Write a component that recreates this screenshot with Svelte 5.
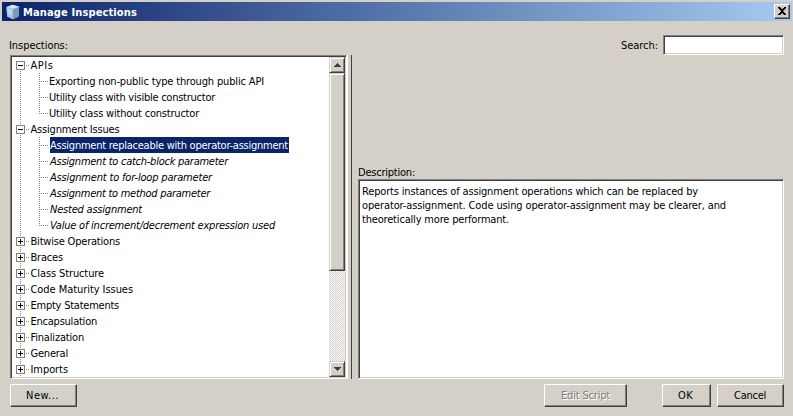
<script>
  const groups = [
    { name: 'APIs', open: true, items: [
      { t: 'Exporting non-public type through public API', w: 215 },
      { t: 'Utility class with visible constructor', w: 166 },
      { t: 'Utility class without constructor', w: 150 }
    ] , w: 23 },
    { name: 'Assignment Issues', open: true, items: [
      { t: 'Assignment replaceable with operator-assignment', w: 238, selected: true },
      { t: 'Assignment to catch-block parameter', w: 178, off: true },
      { t: 'Assignment to for-loop parameter', w: 162, off: true },
      { t: 'Assignment to method parameter', w: 160, off: true },
      { t: 'Nested assignment', w: 92, off: true },
      { t: 'Value of increment/decrement expression used', w: 225, off: true }
    ], w: 89 },
    { name: 'Bitwise Operations', w: 89.5 },
    { name: 'Braces', w: 32.5 },
    { name: 'Class Structure', w: 73.5 },
    { name: 'Code Maturity Issues', w: 102.5 },
    { name: 'Empty Statements', w: 88.5 },
    { name: 'Encapsulation', w: 66.5 },
    { name: 'Finalization', w: 53.5 },
    { name: 'General', w: 37.5 },
    { name: 'Imports', w: 37.5 }
  ];
  const description = [
    { t: 'Reports instances of assignment operations which can be replaced by', w: 336 },
    { t: 'operator-assignment. Code using operator-assignment may be clearer, and', w: 364 },
    { t: 'theoretically more performant.', w: 147 }
  ];

  function fit(node, width) {
    node.style.letterSpacing = '0px';
    const natural = node.getBoundingClientRect().width;
    node.style.letterSpacing = (width - natural) / node.textContent.length + 'px';
  }
</script>

{#snippet label(text, width)}<span class="label" use:fit={width}>{text}</span>{/snippet}

<div class="dialog">
  <header class="titlebar">
    <svg class="logo" width="14" height="16" viewBox="0 0 14 16">
      <path d="M6.5 .8 13.2 2.8 12.6 12.4 7 15.3 1.2 12.6 .4 3Z" fill="#8fabcb" />
      <path d="M6.5 .8 13.2 2.8 7.5 5 .4 3Z" fill="#d3e7f6" />
      <path d="M.4 3 7.5 5 7 15.3 1.2 12.6Z" fill="#a4c4e6" />
      <path d="M7.5 5 13.2 2.8 12.6 12.4 7 15.3Z" fill="#7c99ba" />
      <path d="M1.2 4 5.5 5.2V11.5L1.8 10Z" fill="#bcd8f3" />
    </svg>
    <h1>{@render label('Manage Inspections', 114)}</h1>
    <button class="close" aria-label="Close">
      <svg width="8" height="8" viewBox="0 0 8 8" shape-rendering="crispEdges"><path d="M0 0h2v1h1v1h2V1h1V0h2v1H7v1H6v1H5v2h1v1h1v1h1v1H6V7H5V6H3v1H2v1H0V7h1V6h1V5h1V3H2V2H1V1H0Z" /></svg>
    </button>
  </header>

  <div class="top">
    <span>{@render label('Inspections:', 59)}</span>
    <div class="search"><span>{@render label('Search:', 37)}</span><input class="sunken" aria-label="Search" /></div>
  </div>

  <main>
    <section class="tree sunken">
      <div class="rows">
        {#each groups as g, i}
          <div class="row group">
            <svg width="18" height="16" viewBox="0 0 18 16" shape-rendering="crispEdges">
              {#if i > 0}<path class="dots" d="M8.5 0V4" />{/if}
              <path class="dots" d="M8.5 14V16" />
              <path class="dots" d="M14 8.5H18" />
              <rect x="4.5" y="4.5" width="8" height="8" fill="#fff" stroke="#808080" />
              <path d="M6 8.5h5" stroke="#000" />
              {#if !g.open}<path d="M8.5 6v5" stroke="#000" />{/if}
            </svg>
            <span class="cell">{@render label(g.name, g.w)}</span>
          </div>
          {#each g.items ?? [] as item, j}
            <div class="row" class:off={item.off} class:selected={item.selected}>
              <svg width="37" height="16" viewBox="0 0 37 16" shape-rendering="crispEdges">
                <path class="dots" d="M8.5 0V16" />
                <path class="dots" d="M27.5 0V{j === g.items.length - 1 ? 9 : 16}" />
                <path class="dots" d="M29 8.5H37" />
              </svg>
              <span class="cell">{@render label(item.t, item.w)}</span>
            </div>
          {/each}
        {/each}
      </div>
      <div class="scrollbar">
        <div class="raised arrow"><svg width="7" height="4" viewBox="0 0 7 4" shape-rendering="crispEdges"><path d="M3 0h1v1h1v1h1v1h1v1H0V3h1V2h1V1h1Z" fill="#404040" /></svg></div>
        <div class="raised thumb"></div>
        <div class="track"></div>
        <div class="raised arrow"><svg width="7" height="4" viewBox="0 0 7 4" shape-rendering="crispEdges"><path d="M0 0h7v1H6v1H5v1H4v1H3V3H2V2H1V1H0Z" fill="#404040" /></svg></div>
      </div>
    </section>
    <div class="divider"></div>
    <section class="detail">
      <div class="caption">{@render label('Description:', 57)}</div>
      <div class="sunken description">
        {#each description as line}<div>{@render label(line.t, line.w)}</div>{/each}
      </div>
    </section>
  </main>

  <footer>
    <button class="raised push new">{@render label('New...', 33)}</button>
    <button class="raised push edit" disabled>{@render label('Edit Script', 49)}</button>
    <button class="raised push ok">{@render label('OK', 15)}</button>
    <button class="raised push cancel">{@render label('Cancel', 32)}</button>
  </footer>
</div>

<style>
  :global(body) { margin: 0; }
  .dialog {
    box-sizing: border-box;
    width: 793px;
    height: 416px;
    padding: 2px 1px 0 2px;
    overflow: hidden;
    display: flex;
    flex-direction: column;
    background: #d4d0c8;
    color: #000;
    font: 11px/16px 'DejaVu Sans Condensed', 'DejaVu Sans', sans-serif;
    font-stretch: condensed;
  }
  .label { display: inline-block; white-space: pre; }
  .titlebar {
    box-sizing: border-box;
    height: 19px;
    flex: none;
    display: flex;
    align-items: center;
    padding: 0 2px 0 4px;
    background: linear-gradient(90deg, #0a246a, #a6caf0);
  }
  h1 { margin: 3px auto 0 3px; font: inherit; font-weight: bold; color: #fff; }
  button { font: inherit; padding: 0; color: #000; background: #d4d0c8; border-radius: 0; }
  .close {
    box-sizing: border-box;
    width: 16px;
    height: 15px;
    display: flex;
    align-items: flex-start;
    justify-content: center;
    padding-top: 2px;
    border: 1px solid;
    border-color: #fff #404040 #404040 #fff;
    box-shadow: inset -1px -1px #808080;
  }
  .close path { stroke: #000; stroke-width: .4; }
  .sunken {
    box-sizing: border-box;
    background: #fff;
    border: 1px solid;
    border-color: #808080 #fff #fff #808080;
    box-shadow: inset 1px 1px #404040, inset -1px -1px #d4d0c8;
  }
  .top {
    height: 34px;
    flex: none;
    display: flex;
    justify-content: space-between;
    align-items: flex-end;
    padding: 0 8px 0 7px;
  }
  .top > span { margin-bottom: 1px; }
  .search { display: flex; align-items: center; gap: 5px; }
  .search span { padding-top: 1px; }
  .search input { width: 121px; height: 20px; padding: 0; outline: 0; border-radius: 0; }
  main { display: flex; flex: none; height: 324px; padding: 0 8px; }
  .tree { width: 337px; display: flex; padding: 1px; }
  .rows { flex: 1; overflow: hidden; }
  .row { display: flex; height: 16px; }
  .row svg { flex: none; }
  .cell { box-sizing: border-box; height: 16px; padding-top: 1px; }
  .group .cell { padding-left: .5px; }
  .off .cell { margin-left: 1px; }
  .selected .cell { margin-left: 1px; padding-right: 1px; background: #0a246a; color: #fff; }
  .off { font-style: italic; }
  .dots { stroke: #808080; stroke-dasharray: 1 1; fill: none; }
  .scrollbar { width: 16px; display: flex; flex-direction: column; }
  .raised {
    box-sizing: border-box;
    background: #d4d0c8;
    border: 1px solid;
    border-color: #d4d0c8 #404040 #404040 #d4d0c8;
    box-shadow: inset 1px 1px #fff, inset -1px -1px #808080;
  }
  .arrow { height: 16px; display: flex; align-items: center; justify-content: center; }
  .thumb { height: 198px; }
  .track { flex: 1; background: repeating-conic-gradient(#fff 0 25%, #d4d0c8 0 50%) 0 0 / 2px 2px; }
  .divider { width: 3px; border-left: 1px solid #fff; border-right: 1px solid #404040; margin-right: 6px; }
  .detail { flex: 1; display: flex; flex-direction: column; justify-content: flex-end; }
  .caption { height: 14px; }
  .description { height: 200px; padding: 5px 3px; line-height: 14px; }
  footer { display: flex; padding: 5px 8px 0; }
  .push {
    height: 23px;
    border-color: #fff #404040 #404040 #fff;
    box-shadow: inset -1px -1px #808080;
    line-height: 20px;
  }
  .new { width: 67px; margin-right: auto; padding-right: 2px; }
  .edit { width: 83px; margin-right: 35px; color: #808080; text-shadow: 1px 1px #fff; }
  .ok { width: 49px; margin-right: 6px; padding-right: 2px; }
  .cancel { width: 67px; padding-right: 1px; }
</style>
